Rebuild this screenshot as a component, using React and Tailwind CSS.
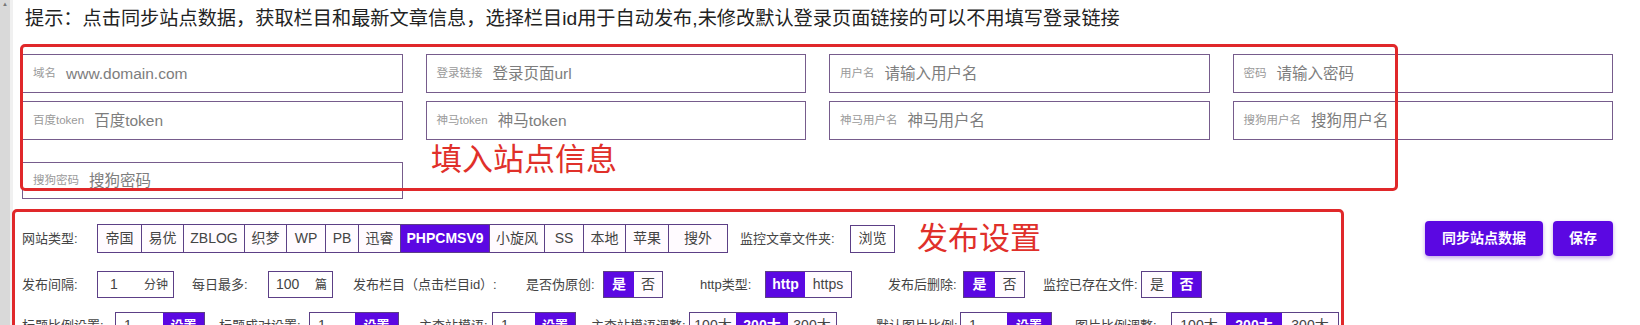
import React from "react";

const fields = [
  ["域名", "www.domain.com"],
  ["登录链接", "登录页面url"],
  ["用户名", "请输入用户名"],
  ["密码", "请输入密码"],
  ["百度token", "百度token"],
  ["神马token", "神马token"],
  ["神马用户名", "神马用户名"],
  ["搜狗用户名", "搜狗用户名"],
];

const siteTypes = [
  ["帝国", "w-[43px]"],
  ["易优", "w-[42px]"],
  ["ZBLOG", "w-[61px]"],
  ["织梦", "w-[42px]"],
  ["WP", "w-[39px]"],
  ["PB", "w-[33px]"],
  ["迅睿", "w-[42px]"],
  ["PHPCMSV9", "w-[89px]"],
  ["小旋风", "w-[55px]"],
  ["SS", "w-[39px]"],
  ["本地", "w-[42px]"],
  ["苹果", "w-[43px]"],
  ["搜外", "w-[59px]"],
];

const Field = ({ label, placeholder, className = "" }) => (
  <div className={`flex items-center border border-[#765c8c] bg-white pl-[10px] ${className}`}>
    <span className="mr-[10px] text-[11.5px] text-[#9a9a9a]">{label}</span>
    <span className="text-[15.5px] text-[#7d7d7d]">{placeholder}</span>
  </div>
);

const Toggle = ({ items, active, widths }) => (
  <div className="flex h-[27px] border border-[#5c3f86]">
    {items.map((t, i) => (
      <div
        key={t}
        className={`flex items-center justify-center text-[14px] ${widths[i]} ${
          i === active ? "bg-[#5b08e2] font-bold text-white" : "bg-[#fffbff] text-[#444]"
        }`}
      >
        {t}
      </div>
    ))}
  </div>
);

const SetBox = ({ w, sw }) => (
  <div className="flex h-[27px] border border-[#5c3f86]">
    <div className={`flex items-center bg-white pl-[8px] text-[14px] text-[#444] ${w}`}>1</div>
    <div className={`flex items-center justify-center bg-[#5b08e2] text-[13px] font-bold text-white ${sw}`}>
      设置
    </div>
  </div>
);

export default function App() {
  return (
    <div
      className="relative flex h-[325px] w-[1640px] overflow-hidden bg-white text-[#333]"
      style={{ fontFamily: '"Liberation Sans", "Noto Sans CJK SC", sans-serif' }}
    >
      {/* scrollbar strip */}
      <div className="flex w-[10px] shrink-0 flex-col items-center bg-[#d9d9d9]">
        <span className="text-[6px] leading-[8px] text-[#777]">▲</span>
      </div>
      <div className="w-[3px] shrink-0 bg-[#f0f0f0]" />

      <div className="flex-1 pl-[9px]">
        <p className="pl-[3px] pt-[6px] text-[19.2px] leading-[26px] text-[#222]">
          提示：点击同步站点数据，获取栏目和最新文章信息，选择栏目id用于自动发布,未修改默认登录页面链接的可以不用填写登录链接
        </p>

        {/* site info */}
        <div className="mt-[22px] w-[1591px]">
          <div className="grid grid-cols-4 gap-x-[23px] gap-y-[8px]">
            {fields.map(([l, p]) => (
              <Field key={l} label={l} placeholder={p} className="h-[39px]" />
            ))}
          </div>
          <Field label="搜狗密码" placeholder="搜狗密码" className="mt-[22px] h-[37px] w-[381px]" />
        </div>

        {/* publish settings */}
        <div className="mt-[22px] flex h-[35px] items-center text-[13px] text-[#444]">
          <span className="w-[75px] whitespace-nowrap">网站类型:</span>
          <div className="flex h-[29px] border border-[#5c3f86] text-[14px]">
            {siteTypes.map(([t, w], i) => (
              <div
                key={t}
                className={`flex items-center justify-center ${w} ${i > 0 ? "border-l border-[#5c3f86]" : ""} ${
                  t === "PHPCMSV9" ? "bg-[#5b08e2] font-bold text-white" : "bg-[#fffbff] text-[#444]"
                }`}
              >
                {t}
              </div>
            ))}
          </div>
          <span className="ml-[12px] w-[110px] whitespace-nowrap">监控文章文件夹:</span>
          <div className="flex h-[28px] w-[45px] items-center justify-center border border-[#5c3f86] text-[14px]">
            浏览
          </div>
          <div className="ml-auto mr-[27px] flex gap-[10px] text-[14px]">
            <button className="h-[35px] w-[118px] rounded-[4px] bg-[#5b08e2] font-bold text-white shadow-[0_2px_4px_rgba(80,0,180,0.35)]">
              同步站点数据
            </button>
            <button className="h-[35px] w-[60px] rounded-[4px] bg-[#5b08e2] font-bold text-white shadow-[0_2px_4px_rgba(80,0,180,0.35)]">
              保存
            </button>
          </div>
        </div>

        <div className="mt-[15px] flex items-center whitespace-nowrap text-[13px] text-[#444]">
          <span className="w-[75px]">发布间隔:</span>
          <div className="flex h-[27px] w-[77px] items-center border border-[#5c3f86] pl-[12px] text-[14px]">
            <span>1</span>
            <span className="ml-auto mr-[5px] text-[12px]">分钟</span>
          </div>
          <span className="ml-[18px] w-[76px]">每日最多:</span>
          <div className="flex h-[27px] w-[65px] items-center border border-[#5c3f86] pl-[7px] text-[14px]">
            <span>100</span>
            <span className="ml-auto mr-[5px] text-[12px]">篇</span>
          </div>
          <span className="ml-[20px] w-[173px]">发布栏目（点击栏目id）:</span>
          <span className="w-[77px]">是否伪原创:</span>
          <Toggle items={["是", "否"]} active={0} widths={["w-[30px]", "w-[28px]"]} />
          <span className="ml-[37px] w-[65px]">http类型:</span>
          <Toggle items={["http", "https"]} active={0} widths={["w-[39px]", "w-[46px]"]} />
          <span className="ml-[36px] w-[75px]">发布后删除:</span>
          <Toggle items={["是", "否"]} active={0} widths={["w-[31px]", "w-[29px]"]} />
          <span className="ml-[18px] w-[98px]">监控已存在文件:</span>
          <Toggle items={["是", "否"]} active={1} widths={["w-[30px]", "w-[29px]"]} />
        </div>

        <div className="mt-[14px] flex items-center whitespace-nowrap text-[13px] text-[#444]">
          <span className="w-[93px]">标题比例设置:</span>
          <SetBox w="w-[47px]" sw="w-[41px]" />
          <span className="ml-[14px] w-[90px]">标题成对设置:</span>
          <SetBox w="w-[45px]" sw="w-[43px]" />
          <span className="ml-[20px] w-[73px]">主查站模语:</span>
          <SetBox w="w-[42px]" sw="w-[40px]" />
          <span className="ml-[15px] w-[98px]">主查站模语调整:</span>
          <Toggle items={["100大", "200大", "300大"]} active={1} widths={["w-[46px]", "w-[52px]", "w-[48px]"]} />
          <span className="ml-[39px] w-[84px]">默认图片比例:</span>
          <SetBox w="w-[46px]" sw="w-[44px]" />
          <span className="ml-[23px] w-[96px]">图片比例调整:</span>
          <Toggle items={["100大", "200大", "300大"]} active={1} widths={["w-[54px]", "w-[56px]", "w-[56px]"]} />
        </div>
      </div>

      {/* annotation overlays */}
      <div className="pointer-events-none absolute left-[20px] top-[44px] h-[147px] w-[1378px] rounded-[5px] border-[3px] border-[#e0282a]" />
      <span className="pointer-events-none absolute left-[431px] top-[140px] text-[31px] leading-[40px] text-[#e0302a]">
        填入站点信息
      </span>
      <div className="pointer-events-none absolute left-[12px] top-[209px] h-[160px] w-[1332px] rounded-[5px] border-[3px] border-[#e0282a]" />
      <span className="pointer-events-none absolute left-[917px] top-[219px] text-[31px] leading-[40px] text-[#e0302a]">
        发布设置
      </span>
    </div>
  );
}
